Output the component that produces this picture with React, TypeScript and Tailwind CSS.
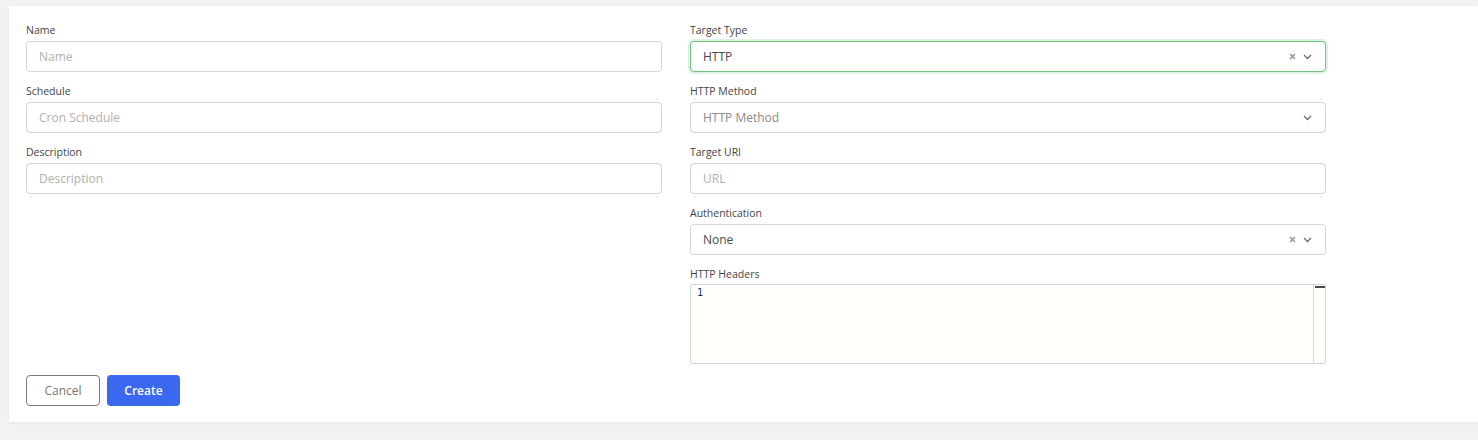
import React from "react";

const font = { fontFamily: '"Open Sans", "Liberation Sans", sans-serif' };

function Label({ children }: { children: React.ReactNode }) {
  return <div className="text-[10.5px] leading-[15px] text-[#444] mb-[3px]">{children}</div>;
}

function TextInput({ placeholder }: { placeholder: string }) {
  return (
    <div className="h-[31px] rounded-[4px] border border-[#d4d4d4] bg-white flex items-center px-[12px] pt-[1px] text-[12px] text-[#b0b0b0]">
      {placeholder}
    </div>
  );
}

function Chevron() {
  return (
    <svg width="9" height="6" viewBox="0 0 9 6" className="ml-[7px]">
      <path d="M1 1 L4.5 4.5 L8 1" fill="none" stroke="#6b6b6b" strokeWidth="1.3" />
    </svg>
  );
}

function Clear() {
  return (
    <svg width="7" height="7" viewBox="0 0 7 7">
      <path d="M1 1 L6 6 M6 1 L1 6" fill="none" stroke="#8a8a8a" strokeWidth="1.2" />
    </svg>
  );
}

function Select({
  value,
  placeholder,
  clearable,
  focused,
}: {
  value?: string;
  placeholder?: string;
  clearable?: boolean;
  focused?: boolean;
}) {
  return (
    <div
      className={
        "h-[31px] rounded-[4px] border bg-white flex items-center pl-[12px] pr-[13px] text-[12px] " +
        (focused
          ? "border-[#6fc37a] shadow-[0_0_0_2px_rgba(120,205,130,0.25)]"
          : "border-[#d4d4d4]")
      }
    >
      <span className={"flex-1 pt-[1px] " + (value ? "text-[#4a4a4a]" : "text-[#8a8a8a]")}>{value ?? placeholder}</span>
      {clearable && <Clear />}
      <Chevron />
    </div>
  );
}

function Field({ label, children, last }: { label: string; children: React.ReactNode; last?: boolean }) {
  return (
    <div className={last ? "" : "mb-[12px]"}>
      <Label>{label}</Label>
      {children}
    </div>
  );
}

export default function App() {
  return (
    <div className="w-[1478px] h-[440px] bg-[#f2f2f2] pt-[6px] pl-[9px] overflow-hidden" style={font}>
      <div className="bg-white w-[1469px] h-[416px] shadow-[0_1px_4px_rgba(0,0,0,0.06)] pt-[17px] pl-[17px]">
        <div className="w-[1300px] grid grid-cols-2 gap-x-[28px]">
          <div>
            <Field label="Name">
              <TextInput placeholder="Name" />
            </Field>
            <Field label="Schedule">
              <TextInput placeholder="Cron Schedule" />
            </Field>
            <Field label="Description">
              <TextInput placeholder="Description" />
            </Field>
          </div>
          <div>
            <Field label="Target Type">
              <Select value="HTTP" clearable focused />
            </Field>
            <Field label="HTTP Method">
              <Select placeholder="HTTP Method" />
            </Field>
            <Field label="Target URI">
              <TextInput placeholder="URL" />
            </Field>
            <Field label="Authentication">
              <Select value="None" clearable />
            </Field>
            <Field label="HTTP Headers">
              <div className="-mt-[1px] h-[80px] border border-[#d6d6d6] rounded-[2px] bg-[#fffffc] flex">
                <div className="flex-1 pl-[6px] pt-[1px] text-[10px] leading-[14px] text-[#1c2a6e]" style={{ fontFamily: '"DejaVu Sans Mono", monospace' }}>
                  1
                </div>
                <div className="w-[12px] border-l border-[#d6d6d6] pt-[1px] flex justify-center">
                  <div className="w-[10px] h-[2px] bg-[#4a4a4a]" />
                </div>
              </div>
            </Field>
          </div>
        </div>
        <div className="flex gap-[7px] -mt-[1px]">
          <button className="w-[74px] h-[31px] rounded-[4px] border border-[#7a7a7a] bg-white text-[12px] text-[#777]">
            Cancel
          </button>
          <button className="w-[73px] h-[31px] rounded-[4px] bg-[#3a68ee] text-[12px] font-semibold text-white">
            Create
          </button>
        </div>
      </div>
    </div>
  );
}
